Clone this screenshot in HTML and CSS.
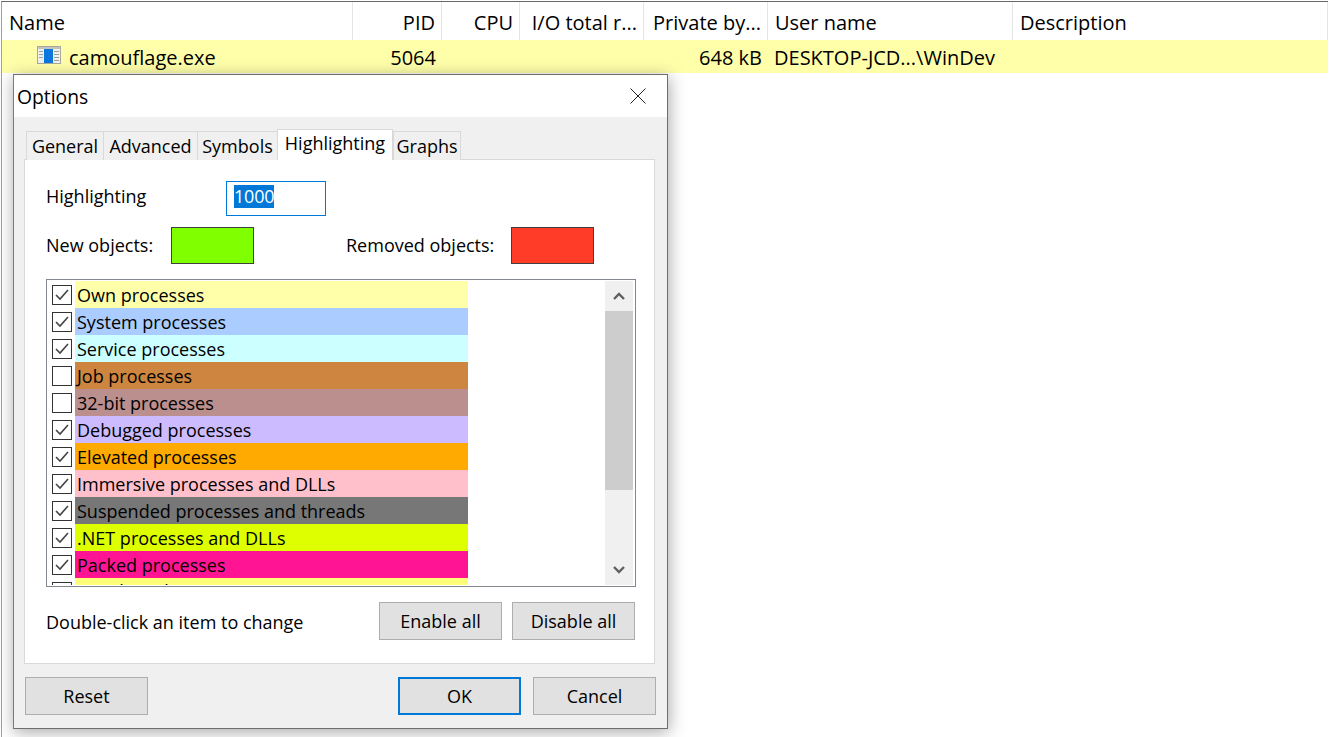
FILE: index.html
```html
<!DOCTYPE html>
<html lang="en">
<head>
<meta charset="utf-8">
<title>Options</title>
<link rel="stylesheet" href="styles.css">
</head>
<body>
<main class="app">
  <div class="table">
    <div class="thead">
      <div class="th c-name">Name</div>
      <div class="th c-pid right">PID</div>
      <div class="th c-cpu right">CPU</div>
      <div class="th c-io right">I/O total r...</div>
      <div class="th c-priv right">Private by...</div>
      <div class="th c-user">User name</div>
      <div class="th c-desc">Description</div>
    </div>
    <div class="tr">
      <div class="td c-name name-cell">
        <svg class="proc-icon" width="25" height="18" viewBox="0 0 25 18">
          <rect x="0.5" y="0.5" width="23" height="17" fill="#f0f0ee" stroke="#a8a8a0"/>
          <rect x="1" y="1" width="22" height="2" fill="#c4c4bc"/>
          <rect x="7" y="3" width="9" height="14" fill="#0a78dc"/>
          <path d="M2 5.5h4M2 8.5h4M2 11.5h4M17 5.5h5M17 8.5h5M17 11.5h5M17 14.5h5" stroke="#a0a098" fill="none"/>
        </svg>
        <span class="proc-name">camouflage.exe</span>
      </div>
      <div class="td c-pid right">5064</div>
      <div class="td c-cpu"></div>
      <div class="td c-io"></div>
      <div class="td c-priv right">648 kB</div>
      <div class="td c-user">DESKTOP-JCD...\WinDev</div>
      <div class="td c-desc"></div>
    </div>
  </div>

  <section class="dialog">
    <header class="titlebar">
      <span>Options</span>
      <svg class="close" width="16" height="16" viewBox="0 0 16 16"><path d="M0.5 0.5L15.5 15.5M15.5 0.5L0.5 15.5" stroke="#222" fill="none"/></svg>
    </header>
    <div class="body">
      <nav class="tabs">
        <div class="tab t1">General</div>
        <div class="tab t2">Advanced</div>
        <div class="tab t3">Symbols</div>
        <div class="tab t4 active">Highlighting</div>
        <div class="tab t5">Graphs</div>
      </nav>
      <div class="page">
        <div class="row-duration">
          <label class="lbl-duration">Highlighting</label>
          <div class="edit"><span class="sel">1000</span></div>
        </div>
        <div class="row-colors">
          <span class="lbl-new">New objects:</span>
          <div class="swatch green"></div>
          <span class="lbl-removed">Removed objects:</span>
          <div class="swatch red"></div>
        </div>
        <div class="list">
          <div class="items">
            <div class="item"><span class="cb on"><svg width="14" height="12" viewBox="0 0 14 12"><path d="M1 6l4 4 8-9" fill="none" stroke="#444" stroke-width="1.6"/></svg></span><span class="label own">Own processes</span></div>
            <div class="item"><span class="cb on"><svg width="14" height="12" viewBox="0 0 14 12"><path d="M1 6l4 4 8-9" fill="none" stroke="#444" stroke-width="1.6"/></svg></span><span class="label sys">System processes</span></div>
            <div class="item"><span class="cb on"><svg width="14" height="12" viewBox="0 0 14 12"><path d="M1 6l4 4 8-9" fill="none" stroke="#444" stroke-width="1.6"/></svg></span><span class="label svc">Service processes</span></div>
            <div class="item"><span class="cb"></span><span class="label job">Job processes</span></div>
            <div class="item"><span class="cb"></span><span class="label b32">32-bit processes</span></div>
            <div class="item"><span class="cb on"><svg width="14" height="12" viewBox="0 0 14 12"><path d="M1 6l4 4 8-9" fill="none" stroke="#444" stroke-width="1.6"/></svg></span><span class="label dbg">Debugged processes</span></div>
            <div class="item"><span class="cb on"><svg width="14" height="12" viewBox="0 0 14 12"><path d="M1 6l4 4 8-9" fill="none" stroke="#444" stroke-width="1.6"/></svg></span><span class="label elv">Elevated processes</span></div>
            <div class="item"><span class="cb on"><svg width="14" height="12" viewBox="0 0 14 12"><path d="M1 6l4 4 8-9" fill="none" stroke="#444" stroke-width="1.6"/></svg></span><span class="label imm">Immersive processes and DLLs</span></div>
            <div class="item"><span class="cb on"><svg width="14" height="12" viewBox="0 0 14 12"><path d="M1 6l4 4 8-9" fill="none" stroke="#444" stroke-width="1.6"/></svg></span><span class="label sus">Suspended processes and threads</span></div>
            <div class="item"><span class="cb on"><svg width="14" height="12" viewBox="0 0 14 12"><path d="M1 6l4 4 8-9" fill="none" stroke="#444" stroke-width="1.6"/></svg></span><span class="label net">.NET processes and DLLs</span></div>
            <div class="item"><span class="cb on"><svg width="14" height="12" viewBox="0 0 14 12"><path d="M1 6l4 4 8-9" fill="none" stroke="#444" stroke-width="1.6"/></svg></span><span class="label pck">Packed processes</span></div>
            <div class="item"><span class="cb"></span><span class="label gui">GUI threads</span></div>
          </div>
          <div class="scrollbar">
            <div class="sb-btn"><svg width="12" height="8" viewBox="0 0 12 8"><path d="M1 7l5-5 5 5" fill="none" stroke="#606060" stroke-width="2.4"/></svg></div>
            <div class="sb-thumb"></div>
            <div class="sb-track"></div>
            <div class="sb-btn"><svg width="12" height="8" viewBox="0 0 12 8"><path d="M1 1l5 5 5-5" fill="none" stroke="#606060" stroke-width="2.4"/></svg></div>
          </div>
        </div>
        <div class="row-actions">
          <span class="hint">Double-click an item to change</span>
          <button class="btn">Enable all</button>
          <button class="btn">Disable all</button>
        </div>
      </div>
      <footer class="footer">
        <button class="btn">Reset</button>
        <span class="spacer"></span>
        <button class="btn default">OK</button>
        <button class="btn">Cancel</button>
      </footer>
    </div>
  </section>
</main>
</body>
</html>
```

FILE: styles.css
```css
* { box-sizing: border-box; }
html, body { margin: 0; height: 100%; background: #fff; overflow: hidden; }
body { font-family: "Open Sans", "Noto Sans", "Liberation Sans", sans-serif; font-size: 18px; color: #000; }
.app { position: relative; width: 1339px; height: 737px; padding-top: 1px; padding-left: 1px; }
.table { width: 1327px; height: 736px; border-top: 1px solid #696969; border-left: 1px solid #a0a0a0; font-size: 20px; }
.thead { display: flex; height: 38px; }
.tr { display: flex; height: 33px; background: #ffffaa; }
.th { border-right: 1px solid #e5e5e5; line-height: 42px; padding: 0 6px 0 7px; white-space: nowrap; }
.td { line-height: 35px; padding: 0 6px; white-space: nowrap; }
.right { text-align: right; }
.c-name { width: 351px; }
.c-pid { width: 89px; }
.c-cpu { width: 78px; }
.c-io { width: 124px; }
.c-priv { width: 124px; }
.c-user { width: 245px; }
.c-desc { width: 315px; }
.name-cell { display: flex; align-items: center; padding-left: 35px; gap: 7px; }
.proc-icon { flex: none; margin-top: -3px; }
.proc-name { margin-top: 2px; }

.dialog {
  position: absolute; left: 13px; top: 74px; width: 655px; height: 655px;
  background: #f0f0f0; border: 1px solid #6e6e6e; border-left-color: #7a7a7a;
  box-shadow: 1px 3px 16px rgba(0,0,0,.35);
  display: flex; flex-direction: column;
}
.titlebar { height: 42px; background: #fff; display: flex; align-items: center; justify-content: space-between; padding: 0 21px 0 3px; flex: none; font-size: 19.3px; }
.close { flex: none; margin-top: -1px; }
.body { flex: 1; display: flex; flex-direction: column; padding: 12px 10px 12px 10px; }
.tabs { display: flex; height: 31px; padding-left: 2px; align-items: flex-end; margin-bottom: -1px; position: relative; }
.tab { height: 29px; background: #f0f0f0; border: 1px solid #d9d9d9; border-bottom: none; border-right: none; line-height: 28px; text-align: center; white-space: nowrap; }
.t1 { width: 77px; } .t2 { width: 94px; } .t3 { width: 80px; }
.t4 { width: 116px; }
.t5 { width: 68px; border-right: 1px solid #d9d9d9; }
.tab.active { height: 31px; background: #fff; border-right: 1px solid #d9d9d9; line-height: 26px; position: relative; z-index: 1; }
.page { width: 631px; height: 505px; background: #fff; border: 1px solid #d9d9d9; padding: 21px 18px 0 21px; flex: none; }
.row-duration { display: flex; align-items: center; height: 35px; }
.lbl-duration { width: 180px; margin-top: -6px; }
.edit { width: 100px; height: 35px; border: 1px solid #0078d7; padding: 2px 7px; }
.sel { display: inline-block; background: #0078d7; color: #fff; height: 23px; line-height: 23px; letter-spacing: -0.2px; }
.row-colors { display: flex; align-items: center; height: 37px; margin-top: 11px; }
.lbl-new { width: 125px; margin-top: -1px; }
.lbl-removed { width: 165px; margin-left: 92px; margin-top: -1px; }
.swatch { width: 83px; height: 37px; border: 1px solid #404040; }
.green { background: #80ff00; }
.red { background: #ff3c28; }
.list { width: 590px; height: 308px; margin-top: 15px; border: 1px solid #828790; display: flex; padding: 1px 2px 1px 1px; overflow: hidden; background: #fff; }
.items { flex: 1; overflow: hidden; padding-left: 4px; }
.item { display: flex; height: 27px; align-items: center; }
.cb { width: 20px; height: 20px; border: 1px solid #333; background: #fff; margin-right: 3px; flex: none; display: flex; align-items: center; justify-content: center; }
.label { width: 393px; height: 27px; line-height: 29px; padding-left: 2px; white-space: nowrap; overflow: hidden; }
.own { background: #ffffaa; }
.sys { background: #aaccff; }
.svc { background: #ccffff; }
.job { background: #cd853f; }
.b32 { background: #bc8f8f; }
.dbg { background: #ccbbff; }
.elv { background: #ffaa00; }
.imm { background: #ffc0cb; }
.sus { background: #777777; }
.net { background: #deff00; }
.pck { background: #ff1493; }
.gui { background: #ffff77; line-height: 27px; }
.scrollbar { width: 28px; flex: none; display: flex; flex-direction: column; background: #f0f0f0; }
.sb-btn { height: 30px; display: flex; align-items: center; justify-content: center; flex: none; }
.sb-thumb { height: 179px; background: #cdcdcd; flex: none; }
.sb-track { flex: 1; }
.row-actions { display: flex; align-items: center; margin-top: 15px; width: 589px; }
.hint { flex: 1; margin-top: 2px; }
.btn { font: inherit; width: 123px; height: 38px; background: #e1e1e1; border: 1px solid #adadad; padding: 0; color: #000; line-height: 34px; }
.row-actions .btn + .btn { margin-left: 10px; }
.footer { display: flex; margin-top: 13px; padding-left: 1px; width: 632px; }
.spacer { flex: 1; }
.footer .default { border: 2px solid #0078d7; margin-right: 12px; }
```
